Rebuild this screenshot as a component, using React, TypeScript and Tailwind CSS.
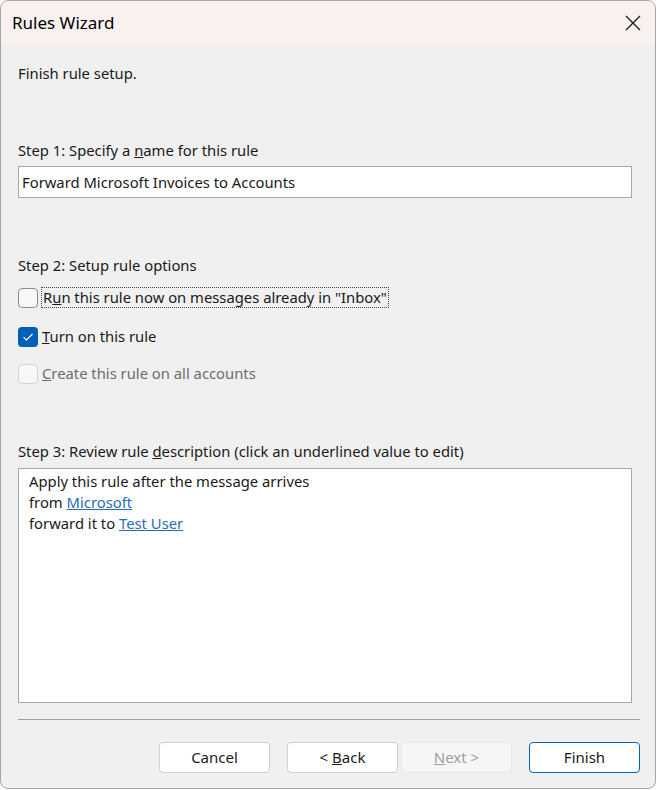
import React from "react";

const font = { fontFamily: '"Noto Sans", "Liberation Sans", sans-serif' };

function Check({ checked, disabled }: { checked?: boolean; disabled?: boolean }) {
  if (checked) {
    return (
      <span className="flex h-[20px] w-[20px] shrink-0 items-center justify-center rounded-[4px] bg-[#005fb8]">
        <svg width="12" height="10" viewBox="0 0 12 10" fill="none">
          <path d="M1.5 5.2 4.4 8 10.5 2" stroke="#fff" strokeWidth="1.1" />
        </svg>
      </span>
    );
  }
  return (
    <span
      className={
        disabled
          ? "h-[20px] w-[20px] shrink-0 rounded-[4px] border border-[#d2d2d2] bg-[#f7f7f7]"
          : "h-[20px] w-[20px] shrink-0 rounded-[4px] border border-[#8a8a8a] bg-[#f7f7f7]"
      }
    />
  );
}

function Btn({ children, primary, disabled }: { children: React.ReactNode; primary?: boolean; disabled?: boolean }) {
  const base = "flex h-[31px] w-[111px] items-center justify-center rounded-[4px] text-[15px]";
  let tone = "border border-[#d0d0d0] bg-white text-[#1a1a1a]";
  if (primary) tone = "border border-[#0067c0] bg-white text-[#1a1a1a]";
  if (disabled) tone = "border border-[#e8e8e8] bg-[#f6f6f6] text-[#9d9d9d]";
  return (
    <button className={`${base} ${tone}`}>
      <span className="whitespace-pre">{children}</span>
    </button>
  );
}

export default function App() {
  return (
    <div className="h-[790px] w-[659px] bg-white" style={font}>
      <div className="flex h-[789px] w-[656px] flex-col overflow-hidden rounded-[8px] border border-[#a6a6a6] bg-[#f0f0f0] text-[14.8px] text-[#1a1a1a]">
        <div className="flex h-[44px] shrink-0 items-center justify-between bg-[#f9f0f0] pl-[11px] pr-[14px]">
          <span className="text-[17px] text-black">Rules Wizard</span>
          <svg width="16" height="16" viewBox="0 0 16 16">
            <path d="M1 1 15 15M15 1 1 15" stroke="#1a1a1a" strokeWidth="1.3" />
          </svg>
        </div>

        <div className="flex flex-1 flex-col px-[17px]">
          <p className="mt-[17px] leading-[22px]">Finish rule setup.</p>

          <p className="mt-[55px] leading-[22px]">
            Step 1: Specify a <u>n</u>ame for this rule
          </p>
          <div className="mt-[5px] flex h-[32px] w-[614px] items-center border border-[#a8a8a8] bg-white px-[3px]">
            Forward Microsoft Invoices to Accounts
          </div>

          <p className="mt-[56px] leading-[22px]">Step 2: Setup rule options</p>
          <div className="mt-[11px] flex items-center gap-[3px]">
            <Check />
            <span className="border border-dotted border-[#444] px-[1px] leading-[19px]">
              R<u>u</u>n this rule now on messages already in "Inbox"
            </span>
          </div>
          <div className="mt-[18px] flex items-center gap-[4px]">
            <Check checked />
            <span className="leading-[21px]">
              <u>T</u>urn on this rule
            </span>
          </div>
          <div className="mt-[16px] flex items-center gap-[4px]">
            <Check disabled />
            <span className="leading-[21px] text-[#6d6d6d]">
              <u>C</u>reate this rule on all accounts
            </span>
          </div>

          <p className="mt-[56px] leading-[22px]">
            Step 3: Review rule <u>d</u>escription (click an underlined value to edit)
          </p>
          <div className="mt-[6px] h-[235px] w-[614px] border border-[#a8a8a8] bg-white px-[10px] pt-[2px] leading-[21px]">
            <div>Apply this rule after the message arrives</div>
            <div>
              from <span className="text-[#2a6cb5] underline">Microsoft</span>
            </div>
            <div>
              forward it to <span className="text-[#2a6cb5] underline">Test User</span>
            </div>
          </div>

          <div className="mt-[16px] h-px w-[622px] bg-[#a0a0a0]" />

          <div className="mt-[22px] flex w-[622px] justify-end">
            <Btn>Cancel</Btn>
            <div className="w-[17px]" />
            <Btn>
              {"< "}
              <u>B</u>ack
            </Btn>
            <div className="w-[3px]" />
            <Btn disabled>
              <u>N</u>ext {">"}
            </Btn>
            <div className="w-[17px]" />
            <Btn primary>Finish</Btn>
          </div>
        </div>
      </div>
    </div>
  );
}
